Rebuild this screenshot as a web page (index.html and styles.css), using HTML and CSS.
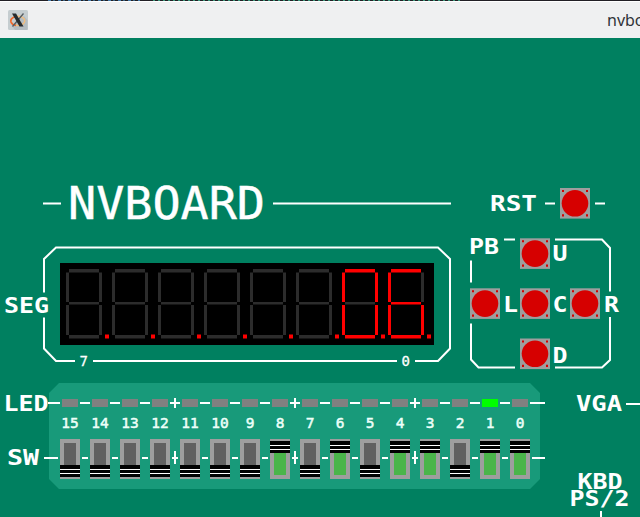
FILE: index.html
```html
<!DOCTYPE html>
<html lang="en">
<head>
<meta charset="utf-8">
<title>nvboard</title>
<link rel="stylesheet" href="styles.css">
</head>
<body>
<div class="backdrop"></div>
<header class="titlebar">
  <svg class="app-icon" width="20" height="20" viewBox="0 0 20 20">
    <rect width="20" height="20" rx="1.5" fill="#c5cdd0"/>
    <path d="M16 6 19.500 10V20H7L4 16Z" fill="#b5bdc2"/>
    <ellipse cx="9.800" cy="10.800" rx="7" ry="4.600" fill="none" stroke="#f1bd80" stroke-width="1.500"/>
    <path d="M7 6.700Q2 8.500 3 12Q4 15 8 15.300" fill="none" stroke="#ed6830" stroke-width="1.700"/>
    <path d="M15.500 3.500 4.500 16.500" stroke="#555d62" stroke-width="1.300"/>
    <path d="M4 3.500H8L15.500 16.500H11.500Z" fill="#252b2e"/>
  </svg>
  <span class="title">nvboard</span>
</header>
<main class="board">
  <svg class="silkscreen" width="640" height="479" viewBox="0 38 640 479">
    <g class="trace">
      <path d="M43 203.500H61M273 203.500H451M545 203.500H555M595 203.500H605"/>
      <path d="M44 292.500V259L56 247.500H438L450 259V348.500L438 361H415M397 361H93M75 361H56L44 348.500V317.500"/>
      <path d="M504 239.500H515M555 239.500H602L610 248V291.500M610 317V360L602 367.500H555M515 367.500H478.500L471 359.500V323.500M471 282.500V260.500"/>
      <path d="M626 404H640M601 511V517"/>
    </g>
    <text class="name" x="68" y="219" textLength="197" lengthAdjust="spacingAndGlyphs">NVBOARD</text>
    <g class="label">
      <text x="490" y="211" textLength="47" lengthAdjust="spacingAndGlyphs">RST</text>
      <text x="469" y="253.500" textLength="30" lengthAdjust="spacingAndGlyphs">PB</text>
      <text x="552.500" y="261" textLength="15" lengthAdjust="spacingAndGlyphs">U</text>
      <text x="503" y="311.500" textLength="15" lengthAdjust="spacingAndGlyphs">L</text>
      <text x="552.500" y="311.500" textLength="15" lengthAdjust="spacingAndGlyphs">C</text>
      <text x="604" y="311.500" textLength="15" lengthAdjust="spacingAndGlyphs">R</text>
      <text x="552.500" y="362.500" textLength="15" lengthAdjust="spacingAndGlyphs">D</text>
      <text x="4" y="312.500" textLength="45" lengthAdjust="spacingAndGlyphs">SEG</text>
      <text x="3.500" y="411" textLength="45" lengthAdjust="spacingAndGlyphs">LED</text>
      <text x="7" y="465" textLength="32" lengthAdjust="spacingAndGlyphs">SW</text>
      <text x="576" y="410.500" textLength="46" lengthAdjust="spacingAndGlyphs">VGA</text>
      <text x="577.500" y="489" textLength="45" lengthAdjust="spacingAndGlyphs">KBD</text>
      <text x="569.500" y="505.500" textLength="60" lengthAdjust="spacingAndGlyphs">PS/2</text>
    </g>
    <g class="small">
      <text x="79.500" y="366">7</text>
      <text x="401.500" y="365.500">0</text>
    </g>
    <defs>
      <g id="button">
        <path d="M0 0H30V30.600H0Z" fill="#9e9e9e"/>
        <path d="M2 2H4V4H2ZM26 2H28V4H26ZM2 26.300H4V28.500H2ZM26 26.300H28V28.500H26Z" fill="#d40000"/>
        <circle cx="15" cy="15.300" r="13.300" fill="#d60000"/>
      </g>
    </defs>
    <use href="#button" x="560" y="188"/>
    <use href="#button" x="520" y="238.300"/>
    <use href="#button" x="470" y="288.300"/>
    <use href="#button" x="520" y="288.300"/>
    <use href="#button" x="570" y="288.300"/>
    <use href="#button" x="520" y="338.500"/>
  </svg>
  <section class="display" id="display"></section>
  <section class="panel">
    <div class="bank leds" id="leds"></div>
    <div class="bank numbers" id="numbers"></div>
    <div class="bank switches" id="switches"></div>
  </section>
</main>
<script src="board.js"></script>
</body>
</html>
```
FILE: styles.css
```css
* { box-sizing: border-box; }

body {
  margin: 0;
  width: 640px;
  height: 517px;
  overflow: hidden;
  background: #008060;
  font-family: "Noto Sans", sans-serif;
}

.backdrop {
  height: 1px;
  background:
    repeating-linear-gradient(90deg, #477eae 0 3px, #211f25 3px 5px, #376385 5px 7px, #211f25 7px 10px) 48px 0 / 92px 1px no-repeat,
    repeating-linear-gradient(90deg, #3b9a7c 0 2px, #211f25 2px 5px) 153px 0 / 307px 1px no-repeat,
    #211f25;
}

.titlebar {
  display: flex;
  align-items: center;
  justify-content: space-between;
  height: 37px;
  padding-left: 8px;
  border-top: 1px solid #fff;
  background: #eff0f1;
}

.app-icon { display: block; margin-bottom: 1px; }

.title {
  flex: none;
  width: 33px;
  overflow: hidden;
  white-space: nowrap;
  font-size: 16px;
  line-height: 24px;
  color: #303338;
}

.board {
  position: relative;
  height: 479px;
  background: #008060;
}

.silkscreen { display: block; }

.trace { fill: none; stroke: #fff; stroke-width: 2; }

.name, .label, .small {
  fill: #fff;
  font-family: "DejaVu Sans Mono", monospace;
}

.name { font-size: 44px; stroke: #fff; stroke-width: 0.4; }
.label { font-size: 20.5px; font-weight: bold; }
.small { font-size: 14px; stroke: #fff; stroke-width: 0.3; }

.display {
  position: absolute;
  left: 60px;
  top: 225px;
  display: grid;
  grid-template-columns: repeat(8, 46px);
  width: 374px;
  height: 82px;
  padding: 6px 0 0 6px;
  background: #000;
}

.digit { display: block; }
.off { fill: #2c2c2c; }
.on { fill: #f00; }

.panel {
  position: absolute;
  left: 49px;
  top: 345px;
  width: 491px;
  height: 106px;
  padding: 14px 0 0 6px;
  background: #189a7a;
  clip-path: polygon(-10px 14px, 0 14px, 0 10px, 10px 0, 481px 0, 491px 10px, 491px 14px, 501px 14px, 501px 92px, 491px 92px, 491px 96px, 481px 106px, 10px 106px, 0 96px, 0 92px, -10px 92px);
}

.bank { display: grid; grid-template-columns: repeat(16, 30px); }
.leds { height: 15px; }
.numbers { height: 27px; }
.switches { height: 40px; }

.leds svg, .switches svg { display: block; overflow: visible; }

.number {
  width: 30px;
  text-align: center;
  font-family: "DejaVu Sans Mono", monospace;
  font-size: 14.5px;
  line-height: 22px;
  -webkit-text-stroke: 0.5px #edfff9;
  color: #edfff9;
}

.mark { fill: none; stroke: #fff; stroke-width: 2; }
```
FILE: board.js
```js
// Segment order: top, upper left, upper right, middle, lower left, lower right, bottom.
const segments = [
  "M3 0H33V3.500H3Z", "M0 3.500H3V33H0Z", "M33 3.500H36V33H33Z",
  "M3 33H33V35.500H3Z", "M0 36H3V66H0Z", "M33 36H36V66H33Z",
  "M3 66H33V69.500H3Z"
];
const digits = ["", "", "", "", "", "", "012456", "013456"];

document.getElementById("display").innerHTML = digits.map(lit =>
  `<svg class="digit" width="46" height="72">${segments.map((d, i) =>
    `<path class="${lit.includes(i) ? "on" : "off"}" d="${d}"/>`).join("")}
    <path class="on" d="M39 65.500H43V69.500H39Z"/></svg>`).join("");

const pins = Array.from({ length: 16 }, (_, i) => 15 - i);
const switchedOn = [8, 6, 4, 3, 1, 0];
const isGroupEnd = n => n === 12 || n === 8 || n === 4;

document.getElementById("leds").innerHTML = pins.map(n =>
  `<svg width="30" height="15">
    <path fill="${n === 1 ? "#00ff00" : "#808080"}" d="M7 2H23V10H7Z"/>
    <path class="mark" d="M25 6H${n ? 35 : 40}${n === 15 ? "M-7 6H5" : ""}${isGroupEnd(n) ? "M30 1V11" : ""}"/>
  </svg>`).join("");

document.getElementById("numbers").innerHTML =
  pins.map(n => `<span class="number">${n}</span>`).join("");

document.getElementById("switches").innerHTML = pins.map(n => {
  const on = switchedOn.includes(n);
  const y = on ? 2 : 26;
  return `<svg width="30" height="40">
    <path fill="#9e9e9e" d="M5 0H25V40H5Z"/>
    <path fill="${on ? "#4ab54a" : "#606060"}" d="M9 4H21V36H9Z"/>
    <path d="M5 ${y}h20v12H5Z"/>
    <path fill="none" stroke="#fff" d="M5 ${y + 4.5}h20M5 ${y + 8.5}h20"/>
    <path class="mark" d="M27 19H${n ? 33 : 40}${n === 15 ? "M-11 19H3" : ""}${isGroupEnd(n) ? "M30 12V25" : ""}"/>
  </svg>`;
}).join("");
```
